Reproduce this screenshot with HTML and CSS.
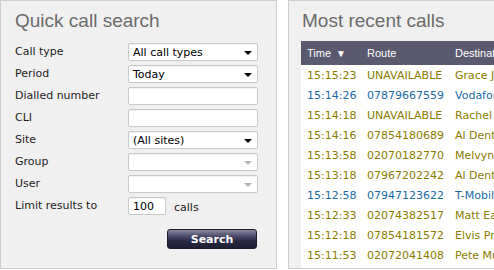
FILE: index.html
```html
<!DOCTYPE html>
<html lang="en">
<head>
  <meta charset="UTF-8">
  <title>Calls</title>
  <link rel="stylesheet" href="styles.css">
</head>
<body>

  <!-- Search panel -->
  <div class="panel search-panel">
    <h2>Quick call search</h2>
    <div class="search-form">
      <label>Call type</label>
      <div class="select"><span>All call types</span><i class="arrow"></i></div>

      <label>Period</label>
      <div class="select"><span>Today</span><i class="arrow"></i></div>

      <label>Dialled number</label>
      <input type="text">

      <label>CLI</label>
      <input type="text">

      <label>Site</label>
      <div class="select"><span>(All sites)</span><i class="arrow"></i></div>

      <label>Group</label>
      <div class="select disabled"><span></span><i class="arrow"></i></div>

      <label>User</label>
      <div class="select disabled"><span></span><i class="arrow"></i></div>

      <label>Limit results to</label>
      <div class="limit">
        <input type="text" value="100">
        <span>calls</span>
      </div>
    </div>
    <div class="actions">
      <button>Search</button>
    </div>
  </div>

  <!-- Recent calls panel -->
  <div class="panel calls-panel">
    <h2>Most recent calls</h2>
    <div class="calls-wrap">
      <table class="calls">
        <thead>
          <tr>
            <th class="col-time">Time <span class="sort">&#9660;</span></th>
            <th class="col-route">Route</th>
            <th>Destination</th>
          </tr>
        </thead>
        <tbody>
          <tr class="in"><td>15:15:23</td><td>UNAVAILABLE</td><td>Grace Jones</td></tr>
          <tr class="out"><td>15:14:26</td><td>07879667559</td><td>Vodafone</td></tr>
          <tr class="in"><td>15:14:18</td><td>UNAVAILABLE</td><td>Rachel Stevens</td></tr>
          <tr class="in"><td>15:14:16</td><td>07854180689</td><td>Al Dente</td></tr>
          <tr class="in"><td>15:13:58</td><td>02070182770</td><td>Melvyn Bragg</td></tr>
          <tr class="in"><td>15:13:18</td><td>07967202242</td><td>Al Dente</td></tr>
          <tr class="out"><td>15:12:58</td><td>07947123622</td><td>T-Mobile</td></tr>
          <tr class="in"><td>15:12:33</td><td>02074382517</td><td>Matt Eagle</td></tr>
          <tr class="in"><td>15:12:18</td><td>07854181572</td><td>Elvis Presley</td></tr>
          <tr class="in"><td>15:11:53</td><td>02072041408</td><td>Pete Murray</td></tr>
        </tbody>
      </table>
    </div>
  </div>

</body>
</html>
```

FILE: styles.css
```css
body {
  margin: 0;
  background: #ffffff;
  font-family: 'DejaVu Sans', Verdana, sans-serif;
  font-size: 11px;
  color: #222;
  display: flex;
  gap: 11px;
  overflow: hidden;
  width: 494px;
  height: 270px;
}

.panel {
  box-sizing: border-box;
  height: 269px;
  background: #f0f0f0;
  border: 1px solid #cdcdcd;
  flex: none;
  display: flex;
  flex-direction: column;
}

.panel h2 {
  margin: 0;
  padding-top: 9px;
  font-family: 'Liberation Sans', Arial, sans-serif;
  font-weight: normal;
  font-size: 19px;
  line-height: 22px;
  color: #6b6b6b;
}

/* search panel */

.search-panel {
  width: 277px;
  padding-left: 14px;
}

.search-form {
  margin-top: 11px;
  display: grid;
  grid-template-columns: 113px 130px;
  grid-auto-rows: 18px;
  row-gap: 4px;
  align-items: center;
}

.search-form label {
  color: #1e1e1e;
  margin-top: -2px;
}

.search-form input,
.select {
  box-sizing: border-box;
  height: 18px;
  width: 130px;
  background: #fff;
  border: 1px solid #c9c9c9;
  border-radius: 2px;
  box-shadow: inset 0 1px 1px rgba(0, 0, 0, 0.06);
  font-family: inherit;
  font-size: 11px;
  color: #000;
  padding: 0 4px;
  margin: 0;
  outline: none;
}

.select {
  position: relative;
  display: flex;
  align-items: center;
}

.select .arrow {
  position: absolute;
  right: 5px;
  top: 7px;
  width: 0;
  height: 0;
  border-left: 4px solid transparent;
  border-right: 4px solid transparent;
  border-top: 4px solid #000;
}

.select.disabled .arrow {
  border-top-color: #b5b5b5;
}

.limit {
  display: flex;
  align-items: center;
}

.search-form .limit input {
  width: 38px;
}

.limit span {
  margin-left: 8px;
  margin-top: 2px;
}

.actions {
  width: 242px;
  margin-top: 14px;
  display: flex;
  justify-content: flex-end;
}

.actions button {
  width: 90px;
  height: 20px;
  border: 1px solid #1c1c2c;
  border-radius: 3px;
  background: linear-gradient(#8a8aa2 0%, #4a4a68 35%, #2a2a46 60%, #1d1d34 100%);
  color: #fff;
  font-family: inherit;
  font-size: 11px;
  font-weight: bold;
  padding: 0;
  cursor: pointer;
}

/* recent calls panel */

.calls-panel {
  width: 300px;
  padding-left: 12px;
}

.calls-panel h2 {
  padding-left: 1px;
}

.calls-wrap {
  margin-top: 9px;
  flex: 1;
  background: #fff;
}

.calls {
  border-collapse: collapse;
  width: 300px;
  white-space: nowrap;
}

.calls th {
  height: 24px;
  padding: 0 0 0 6px;
  background: #5a596f;
  color: #fff;
  font-family: 'Liberation Sans', Arial, sans-serif;
  font-weight: normal;
  font-size: 11px;
  text-align: left;
}

.calls .col-time {
  width: 54px;
}

.calls .col-route {
  width: 82px;
}

.calls .sort {
  font-size: 10px;
  margin-left: 2px;
}

.calls td {
  height: 20px;
  padding: 0 0 0 6px;
}

.calls tr.in td {
  color: #8a7c00;
}

.calls tr.out td {
  color: #1b6aa5;
}
```
